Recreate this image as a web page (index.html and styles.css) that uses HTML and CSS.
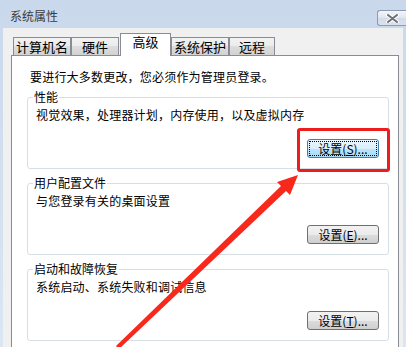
FILE: index.html
```html
<!DOCTYPE html>
<html lang="zh-CN">

<head>
    <meta charset="utf-8">
    <meta name="viewport" content="width=device-width, initial-scale=1">
    <title>系统属性</title>

    <!-- Window look: Windows 7 style dialog -->
    <link rel="stylesheet" href="styles.css">
</head>

<body>
    <div class="window">
        <!-- Title bar -->
        <div class="titlebar">
            <span class="title">系统属性</span>
            <button class="close-btn" aria-label="关闭">
                <svg width="13" height="9" viewBox="0 0 13 9">
                    <path d="M2 1 L11 8 M11 1 L2 8" stroke="#fff" stroke-width="4" stroke-linecap="round"/>
                    <path d="M2 1 L11 8 M11 1 L2 8" stroke="#6b6f76" stroke-width="2" stroke-linecap="round"/>
                </svg>
            </button>
        </div>

        <div class="client">
            <!-- Tabs -->
            <div class="tabs">
                <div class="tab tab-name">计算机名</div>
                <div class="tab tab-hw">硬件</div>
                <div class="tab tab-active">高级</div>
                <div class="tab tab-protect">系统保护</div>
                <div class="tab tab-remote">远程</div>
            </div>

            <!-- Tab page -->
            <div class="panel">
                <p class="notice">要进行大多数更改，您必须作为管理员登录。</p>

                <fieldset class="group">
                    <legend>性能</legend>
                    <p>视觉效果，处理器计划，内存使用，以及虚拟内存</p>
                    <div class="actions">
                        <button class="btn btn-focus"><span class="focus-ring">设置(<u>S</u>)...</span></button>
                    </div>
                </fieldset>

                <fieldset class="group">
                    <legend>用户配置文件</legend>
                    <p>与您登录有关的桌面设置</p>
                    <div class="actions">
                        <button class="btn">设置(<u>E</u>)...</button>
                    </div>
                </fieldset>

                <fieldset class="group">
                    <legend>启动和故障恢复</legend>
                    <p>系统启动、系统失败和调试信息</p>
                    <div class="actions">
                        <button class="btn">设置(<u>T</u>)...</button>
                    </div>
                </fieldset>
            </div>
        </div>

        <!-- Annotation drawn over the dialog -->
        <div class="highlight"></div>
        <svg class="arrow" width="406" height="347" viewBox="0 0 406 347">
            <polygon points="298,175 277,182 281,186 116,346 119,349 286,191 290,195" fill="#f7291c"/>
        </svg>
    </div>
</body>

</html>
```

FILE: styles.css
```css
body {
    margin: 0;
    padding: 0;
    font-family: "Noto Sans CJK SC", "Liberation Sans", sans-serif;
    font-size: 12px;
    color: #000;
}

.window {
    position: relative;
    width: 406px;
    height: 347px;
    overflow: hidden;
    background: linear-gradient(#c9d8eb, #dbe6f3);
    display: flex;
    flex-direction: column;
}

.titlebar {
    height: 28px;
    display: flex;
    justify-content: space-between;
    align-items: flex-start;
    flex-shrink: 0;
}

.title {
    margin: 8px 0 0 10px;
    font-size: 12px;
    line-height: 16px;
    color: #3c3c3c;
}

.close-btn {
    margin: 10px 0 0 0;
    width: 29px;
    height: 16px;
    padding: 0;
    border: 1px solid #8d9bb0;
    border-right: none;
    border-radius: 3px 0 0 3px;
    background: linear-gradient(#f3f6fa, #dfe6ef 50%, #d2dbe7 50%, #d9e2ed);
    display: flex;
    align-items: center;
    justify-content: center;
}

.client {
    flex: 1;
    margin: 0 3px;
    padding: 5px 4px 0 8px;
    background-color: #f0f0f0;
}

/* Tabs */
.tabs {
    display: flex;
    align-items: flex-end;
    height: 23px;
    margin: 0 0 -1px 2px;
    position: relative;
    z-index: 1;
    font-size: 13px;
}

.tab {
    box-sizing: border-box;
    height: 18px;
    margin-bottom: 1px;
    border: 1px solid #898c95;
    border-bottom: none;
    background: linear-gradient(#f2f2f2, #ebebeb 50%, #dddddd 50%, #d2d2d2);
    line-height: 17px;
    text-align: center;
}

.tab-name {
    width: 58px;
}

.tab-hw {
    width: 48px;
}

.tab-protect {
    width: 58px;
}

.tab-remote {
    width: 46px;
}

.tab-active {
    width: 51px;
    height: 23px;
    margin-bottom: 0;
    margin-left: 1px;
    background: #fff;
    line-height: 16px;
}

/* Tab page */
.panel {
    box-sizing: border-box;
    height: 320px;
    padding: 14px 9px 0 15px;
    border: 1px solid #898c95;
    background-color: #fff;
}

.notice {
    margin: 0 0 0 3px;
    line-height: 14px;
    letter-spacing: 0.2px;
}

.group {
    margin: 6px 0 0 0;
    padding: 4px 9px 10px 8px;
    border: 1px solid #d5dfe5;
    border-radius: 3px;
    min-width: 0;
}

.group + .group {
    margin-top: 7px;
}

.group legend {
    margin-left: -3px;
    padding: 0 1px;
    line-height: 14px;
}

.group p {
    margin: 0;
    line-height: 14px;
    letter-spacing: 0.2px;
}

.actions {
    display: flex;
    justify-content: flex-end;
    margin-top: 17px;
}

.btn {
    box-sizing: border-box;
    width: 72px;
    height: 19px;
    padding: 0;
    font-family: inherit;
    font-size: 12px;
    line-height: 15px;
    color: #000;
    border: 1px solid #707070;
    border-radius: 3px;
    background: linear-gradient(#f2f2f2, #ebebeb 50%, #dddddd 50%, #cfcfcf);
}

.btn u {
    text-decoration: underline;
}

.btn-focus {
    border-color: #3c7fb1;
    background: linear-gradient(#eaf6fd, #d9f0fc 50%, #bee6fd 50%, #a7d9f5);
    padding: 1px;
}

.focus-ring {
    display: block;
    height: 13px;
    line-height: 13px;
    border: 1px dotted #000;
}

/* Red annotation */
.highlight {
    position: absolute;
    left: 297px;
    top: 128px;
    width: 93px;
    height: 44px;
    box-sizing: border-box;
    border: 3px solid #ee1d1d;
    border-radius: 3px;
}

.arrow {
    position: absolute;
    left: 0;
    top: 0;
}
```
